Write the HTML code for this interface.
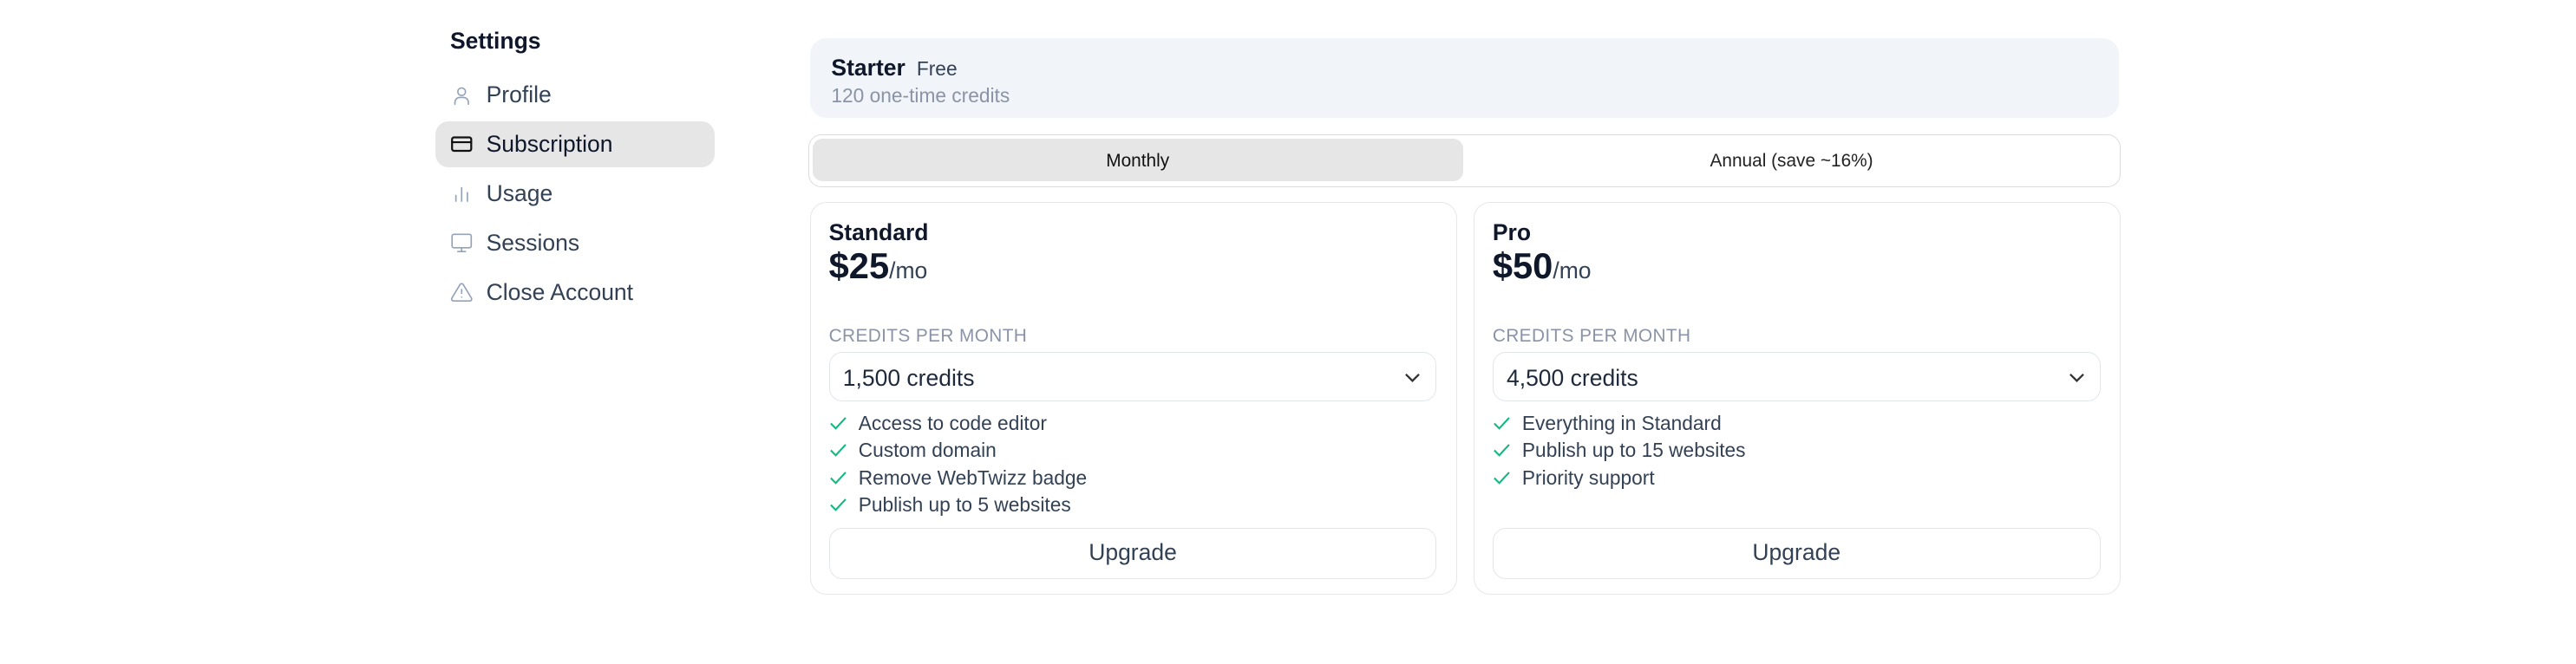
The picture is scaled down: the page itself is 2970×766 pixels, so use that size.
<!DOCTYPE html>
<html><head><meta charset="utf-8"><style>
html,body{margin:0;padding:0;background:#fff;width:2970px;height:766px;overflow:hidden}
#r{zoom:1.8941;width:1568px;height:404px;position:relative;font-family:"Liberation Sans",sans-serif;color:#0f172a}
.a{position:absolute}
.nav{position:absolute;left:265px;width:170px;height:28px;border-radius:8px;display:flex;align-items:center;font-size:14px;color:#334155}
.nav svg{margin-left:9px;margin-right:8px;width:14px;height:14px;fill:none;stroke:#94a3b8;stroke-width:1.5;stroke-linecap:round;stroke-linejoin:round}
.card{position:absolute;top:123px;width:394px;height:239px;border:1px solid #e5e7eb;border-radius:10px;box-sizing:border-box}
.t{position:absolute;left:11px;top:10px;font-size:14px;font-weight:bold}
.p{position:absolute;left:11px;top:26px;font-size:22px;font-weight:bold}
.p span{font-size:14px;font-weight:normal;color:#334155}
.l{position:absolute;left:11px;top:75px;font-size:11px;color:#8a94a6;letter-spacing:.2px}
.s{position:absolute;left:11px;top:91px;width:370px;height:30px;border:1px solid #e2e5ea;border-radius:8px;box-sizing:border-box;font-size:14px;color:#1e293b;padding:7px 0 0 8px}
.s svg{position:absolute;right:9px;top:11px}
ul{position:absolute;left:11px;top:126px;margin:0;padding:0;list-style:none;font-size:12px;color:#334155}
li{height:16.6px;display:flex;align-items:center}
li svg{margin-right:7px}
.b{position:absolute;left:11px;top:198px;width:370px;height:31px;border:1px solid #e2e5ea;border-radius:8px;box-sizing:border-box;font-size:14px;color:#334155;text-align:center;line-height:29px}
</style></head><body><div id="r">
<div class="a" style="left:274px;top:17px;font-size:14px;font-weight:bold">Settings</div>
<div class="nav" style="top:44px"><svg viewBox="0 0 24 24"><circle cx="12" cy="8" r="4"/><path d="M5 21v-2a5 5 0 0 1 5-5h4a5 5 0 0 1 5 5v2"/></svg>Profile</div>
<div class="nav" style="top:74px;background:#e6e6e6;color:#0f172a"><svg viewBox="0 0 24 24" style="stroke:#111;stroke-width:2"><rect x="2" y="5" width="20" height="14" rx="2"/><path d="M2 10h20"/></svg>Subscription</div>
<div class="nav" style="top:104px"><svg viewBox="0 0 24 24"><path d="M6 20v-6M12 20V6M18 20v-9"/></svg>Usage</div>
<div class="nav" style="top:134px"><svg viewBox="0 0 24 24"><rect x="2" y="3" width="20" height="14" rx="2"/><path d="M8 21h8M12 17v4"/></svg>Sessions</div>
<div class="nav" style="top:164px"><svg viewBox="0 0 24 24"><path d="M10.3 3.9 1.8 18a2 2 0 0 0 1.7 3h17a2 2 0 0 0 1.7-3L13.7 3.9a2 2 0 0 0-3.4 0z"/><path d="M12 9v4M12 17h.01"/></svg>Close Account</div>

<div class="a" style="left:493px;top:23px;width:797px;height:49px;background:#f1f4f9;border-radius:10px">
<div class="a" style="left:13px;top:10px;font-size:14px;font-weight:bold">Starter <span style="font-weight:normal;font-size:12px;color:#334155;margin-left:3px">Free</span></div>
<div class="a" style="left:13px;top:28px;font-size:12px;color:#8a94a6">120 one-time credits</div>
</div>

<div class="a" style="left:492px;top:82px;width:799px;height:32px;border:1px solid #dcdcdc;border-radius:8px;box-sizing:border-box">
<div class="a" style="left:2px;top:2px;width:396px;height:26px;background:#e6e6e6;border-radius:6px;font-size:11px;text-align:center;line-height:27px;color:#111">Monthly</div>
<div class="a" style="left:400px;top:2px;width:396px;height:26px;font-size:11px;text-align:center;line-height:27px;color:#222">Annual (save ~16%)</div>
</div>

<div class="card" style="left:493px">
<div class="t">Standard</div>
<div class="p">$25<span>/mo</span></div>
<div class="l">CREDITS PER MONTH</div>
<div class="s">1,500 credits<svg width="10" height="8" viewBox="0 0 10 8"><path d="M1 2l4 4 4-4" fill="none" stroke="#333" stroke-width="1.2"/></svg></div>
<ul>
<li><svg width="11" height="9" viewBox="0 0 11 9"><path d="M1 4.5l3 3L10 1" fill="none" stroke="#10b981" stroke-width="1.1"/></svg>Access to code editor</li>
<li><svg width="11" height="9" viewBox="0 0 11 9"><path d="M1 4.5l3 3L10 1" fill="none" stroke="#10b981" stroke-width="1.1"/></svg>Custom domain</li>
<li><svg width="11" height="9" viewBox="0 0 11 9"><path d="M1 4.5l3 3L10 1" fill="none" stroke="#10b981" stroke-width="1.1"/></svg>Remove WebTwizz badge</li>
<li><svg width="11" height="9" viewBox="0 0 11 9"><path d="M1 4.5l3 3L10 1" fill="none" stroke="#10b981" stroke-width="1.1"/></svg>Publish up to 5 websites</li>
</ul>
<div class="b">Upgrade</div>
</div>

<div class="card" style="left:897px;width:394px">
<div class="t">Pro</div>
<div class="p">$50<span>/mo</span></div>
<div class="l">CREDITS PER MONTH</div>
<div class="s">4,500 credits<svg width="10" height="8" viewBox="0 0 10 8"><path d="M1 2l4 4 4-4" fill="none" stroke="#333" stroke-width="1.2"/></svg></div>
<ul>
<li><svg width="11" height="9" viewBox="0 0 11 9"><path d="M1 4.5l3 3L10 1" fill="none" stroke="#10b981" stroke-width="1.1"/></svg>Everything in Standard</li>
<li><svg width="11" height="9" viewBox="0 0 11 9"><path d="M1 4.5l3 3L10 1" fill="none" stroke="#10b981" stroke-width="1.1"/></svg>Publish up to 15 websites</li>
<li><svg width="11" height="9" viewBox="0 0 11 9"><path d="M1 4.5l3 3L10 1" fill="none" stroke="#10b981" stroke-width="1.1"/></svg>Priority support</li>
</ul>
<div class="b">Upgrade</div>
</div>
</div></body></html>
